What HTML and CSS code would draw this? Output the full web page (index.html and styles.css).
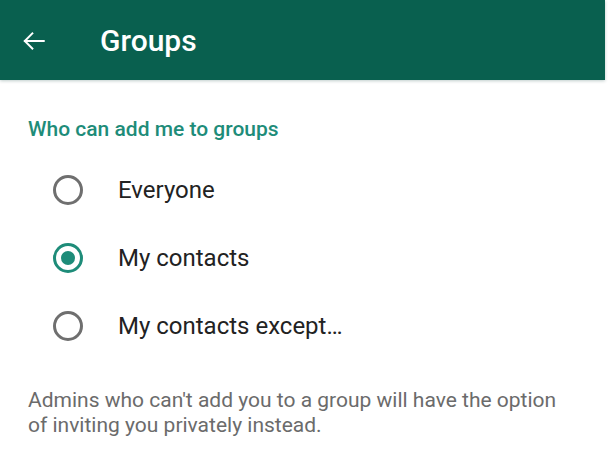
FILE: index.html
```html
<!DOCTYPE html>
<html lang="en">
<head>
  <meta charset="UTF-8" />
  <meta name="viewport" content="width=device-width, initial-scale=1.0"/>
  <title>Groups</title>
  <link rel="stylesheet" href="styles.css">
</head>
<body>
  <div class="screen">
    <header class="app-bar">
      <svg class="back" width="26" height="26" viewBox="0 0 24 24">
        <path d="M21 12H3.5M10.5 5L3.5 12L10.5 19" fill="none" stroke="#fff" stroke-width="1.8" stroke-linecap="square"/>
      </svg>
      <h1>Groups</h1>
    </header>

    <div class="content">
      <h2 class="section-title">Who can add me to groups</h2>

      <div class="options">
        <label class="option">
          <span class="radio"></span>
          <span>Everyone</span>
        </label>
        <label class="option">
          <span class="radio checked"></span>
          <span>My contacts</span>
        </label>
        <label class="option">
          <span class="radio"></span>
          <span>My contacts except…</span>
        </label>
      </div>

      <p class="note">Admins who can't add you to a group will have the option of inviting you privately instead.</p>
    </div>
  </div>
</body>
</html>
```

FILE: styles.css
```css
* {
  box-sizing: border-box;
  font-family: Roboto, 'Liberation Sans', sans-serif;
}

html, body {
  margin: 0;
  padding: 0;
  background: #fff;
}

.screen {
  width: 605px;
  height: 461px;
  background: #fff;
}

.app-bar {
  height: 80px;
  background-color: #09604f;
  display: flex;
  align-items: center;
  padding-left: 21px;
  box-shadow: 0 1px 3px rgba(0, 60, 50, 0.25);
}

.back {
  display: block;
  margin-top: 2px;
}

.app-bar h1 {
  margin: 0 0 0 53px;
  color: #fff;
  font-size: 30px;
  font-weight: 500;
}

.content {
  padding: 36px 0 0 28px;
}

.section-title {
  margin: 0;
  color: #1e8c79;
  font-size: 21px;
  font-weight: 500;
  line-height: 26px;
}

.options {
  display: flex;
  flex-direction: column;
  margin-top: 14px;
}

.option {
  display: flex;
  align-items: center;
  height: 68px;
  font-size: 24px;
  color: #222;
}

.radio {
  width: 30px;
  height: 30px;
  margin-left: 25px;
  margin-right: 35px;
  border: 3px solid #6f6f6f;
  border-radius: 50%;
  display: flex;
  align-items: center;
  justify-content: center;
}

.radio.checked {
  border-color: #1e8c79;
}

.radio.checked::after {
  content: "";
  width: 14px;
  height: 14px;
  border-radius: 50%;
  background: #1e8c79;
}

.note {
  margin: 28px 0 0;
  max-width: 542px;
  color: #6b6b6b;
  font-size: 21px;
  line-height: 25px;
}
```
